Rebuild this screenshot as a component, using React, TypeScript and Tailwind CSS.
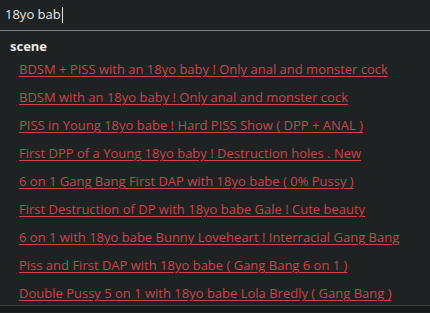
const items = [
  'BDSM + PISS with an 18yo baby ! Only anal and monster cock',
  'BDSM with an 18yo baby ! Only anal and monster cock',
  'PISS in Young 18yo babe ! Hard PISS Show ( DPP + ANAL )',
  'First DPP of a Young 18yo baby ! Destruction holes . New',
  '6 on 1 Gang Bang First DAP with 18yo babe ( 0% Pussy )',
  'First Destruction of DP with 18yo babe Gale ! Cute beauty',
  '6 on 1 with 18yo babe Bunny Loveheart ! Interracial Gang Bang',
  'Piss and First DAP with 18yo babe ( Gang Bang 6 on 1 )',
  'Double Pussy 5 on 1 with 18yo babe Lola Bredly ( Gang Bang )',
]

export default function App() {
  return (
    <div className="h-[313px] w-[430px] overflow-hidden bg-[#1f2222] font-['Open_Sans',sans-serif] text-[13px]">
      <div className="flex h-[31px] items-center border-b border-[#7b8080] px-[5px] text-[#e4e6e6]">
        18yo bab<span className="ml-px inline-block h-[16px] w-px bg-[#e4e6e6]" />
      </div>
      <div className="h-[275px] border-b border-[#3a3e3e]">
        <div className="px-[10px] pt-[7px] font-bold leading-[16px] text-[#e8eaea]">scene</div>
        <ul className="pt-[2px]">
          {items.map((t) => (
            <li key={t} className="flex h-[28px] items-center pl-[19px]">
              <a href="#" className="whitespace-nowrap text-[#c8454b] underline underline-offset-2">
                {t}
              </a>
            </li>
          ))}
        </ul>
      </div>
      <div className="h-[6px] bg-[#181a1a]" />
    </div>
  )
}
